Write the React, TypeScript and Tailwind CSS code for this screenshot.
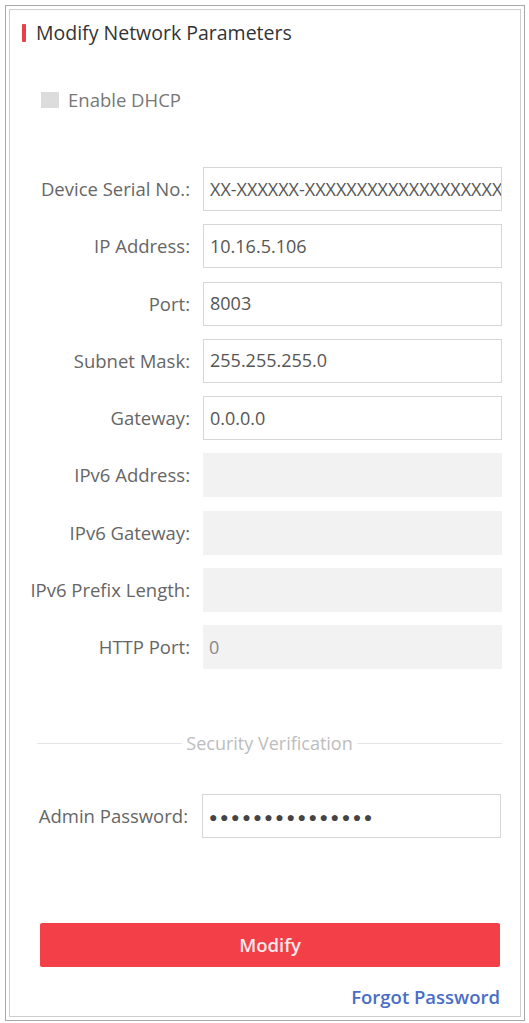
const fields = [
  { label: "Device Serial No.:", value: "XX-XXXXXX-XXXXXXXXXXXXXXXXXXX", disabled: false },
  { label: "IP Address:", value: "10.16.5.106", disabled: false },
  { label: "Port:", value: "8003", disabled: false },
  { label: "Subnet Mask:", value: "255.255.255.0", disabled: false },
  { label: "Gateway:", value: "0.0.0.0", disabled: false },
  { label: "IPv6 Address:", value: "", disabled: true },
  { label: "IPv6 Gateway:", value: "", disabled: true },
  { label: "IPv6 Prefix Length:", value: "", disabled: true },
  { label: "HTTP Port:", value: "0", disabled: true },
];

function Field({ label, value, disabled }: { label: string; value: string; disabled: boolean }) {
  return (
    <>
      <div className="flex h-[44px] items-center justify-end whitespace-nowrap text-[18.5px] text-[#666]">{label}</div>
      <div
        className={`flex h-[44px] items-center overflow-hidden whitespace-nowrap px-[6px] text-[18px] ${
          disabled ? "bg-[#f2f2f2] text-[#888]" : "border border-[#d6d6d6] bg-white text-[#555]"
        }`}
      >
        {value}
      </div>
    </>
  );
}

export default function App() {
  return (
    <div className="h-[1023px] w-[529px] bg-white p-[5px] font-['Open_Sans',sans-serif]">
      <div className="h-[1016px] w-[520px] border border-[#a8a8a8] p-[3px]">
        <div className="flex h-full flex-col border border-[#cfcfcf] bg-white">
          {/* Title */}
          <div className="mt-[11px] flex h-[24px] items-center pl-[12px]">
            <span className="h-[18px] w-[4px] rounded-[1px] bg-[#e8404a]" />
            <span className="ml-[10px] whitespace-nowrap text-[19.5px] text-[#333]">Modify Network Parameters</span>
          </div>

          {/* DHCP */}
          <div className="mt-[43px] flex h-[24px] items-center pl-[31px]">
            <span className="h-[16px] w-[18px] bg-[#dcdcdc]" />
            <span className="ml-[9px] text-[18.5px] text-[#777]">Enable DHCP</span>
          </div>

          {/* Fields */}
          <div className="mt-[55px] grid grid-cols-[180px_299px] gap-x-[13px] gap-y-[13.25px]">
            {fields.map((f) => (
              <Field key={f.label} {...f} />
            ))}
          </div>

          {/* Security Verification */}
          <div className="mt-[62px] flex h-[24px] items-center pl-[27px] pr-[18px]">
            <div className="h-px flex-1 bg-[#e6e6e6]" />
            <span className="px-[4px] text-[18px] text-[#bdbdbd]">Security Verification</span>
            <div className="h-px flex-1 bg-[#e6e6e6]" />
          </div>

          {/* Admin password */}
          <div className="mt-[39px] grid grid-cols-[178px_299px] gap-x-[14px]">
            <div className="flex h-[44px] items-center justify-end text-[18.5px] text-[#666]">Admin Password:</div>
            <div className="flex h-[44px] items-center border border-[#d6d6d6] bg-white px-[6px] text-[14px] tracking-[2.6px] text-[#444]">
              ●●●●●●●●●●●●●●●
            </div>
          </div>

          {/* Modify */}
          <div className="mt-[85px] pl-[30px] pr-[20px]">
            <button className="flex h-[44px] w-full items-center justify-center rounded-[2px] bg-[#f23f48] text-[18.5px] font-semibold text-[#fde8ea]">
              Modify
            </button>
          </div>

          <div className="mt-[18px] flex h-[24px] items-center justify-end pr-[20px]">
            <span className="whitespace-nowrap text-[18.5px] font-semibold text-[#4a6dc6]">Forgot Password</span>
          </div>
        </div>
      </div>
    </div>
  );
}
